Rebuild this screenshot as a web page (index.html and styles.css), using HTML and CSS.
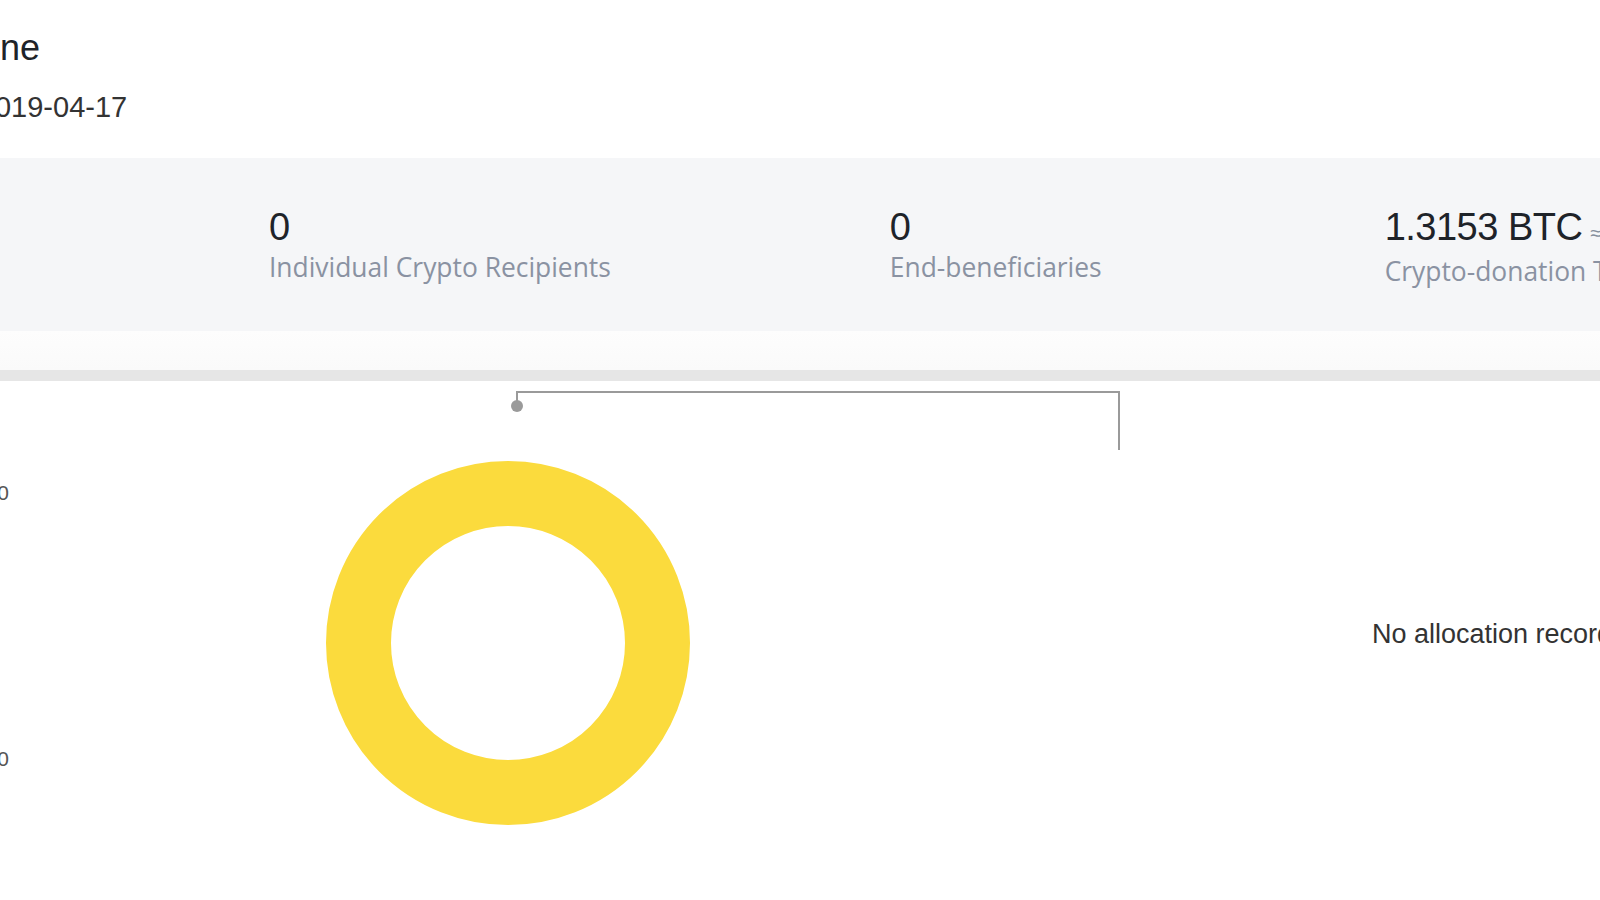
FILE: index.html
```html
<!DOCTYPE html>
<html>
<head>
    <meta charset="UTF-8">
    <title>Idai Cyclone - Donation Details</title>
    <link rel="stylesheet" href="styles.css">
</head>
<body>
    <div class="project-head">
        <h1 class="project-title">Idai Cyclone</h1>
        <div class="project-date">Start date: 2019-04-17</div>
    </div>

    <div class="stats">
        <div class="stat">
            <div class="stat-value">0</div>
            <div class="stat-label">Individual Crypto Recipients</div>
        </div>
        <div class="stat">
            <div class="stat-value">0</div>
            <div class="stat-label">End-beneficiaries</div>
        </div>
        <div class="stat stat-total">
            <div class="stat-value">1.3153 BTC<span class="approx">≈ $6,741.21</span></div>
            <div class="stat-label">Crypto-donation Total</div>
        </div>
    </div>

    <div class="tabs-shade"></div>
    <div class="tabs-line"></div>

    <div class="chart">
        <div class="axis">
            <span class="axis-label">0</span>
            <span class="axis-label axis-label-low">0</span>
        </div>

        <svg class="donut" width="1151" height="519" viewBox="0 0 1151 519">
            <!-- leader line to the legend -->
            <polyline points="508,25 508,11 1110,11 1110,69" fill="none" stroke="#9a9a9a" stroke-width="2"/>
            <circle cx="508" cy="25" r="6" fill="#9a9a9a"/>
            <circle cx="499" cy="262" r="149.5" fill="none" stroke="#fbdb3d" stroke-width="65"/>
        </svg>

        <div class="empty">No allocation records</div>
    </div>
</body>
</html>
```

FILE: styles.css
```css
body {
    margin: 0;
    overflow: hidden;
    background: #fff;
    font-family: 'Liberation Sans', Arial, sans-serif;
    color: #1e2329;
}

.project-head {
    margin-left: -158px;
    padding-top: 26px;
    white-space: nowrap;
}

.project-title {
    margin: 0;
    font-size: 36px;
    font-weight: normal;
    line-height: 44px;
    color: #1e2329;
}

.project-date {
    margin: 21px 0 0 -5px;
    font-size: 29px;
    line-height: 32px;
    color: #333;
}

.stats {
    display: flex;
    gap: 279px;
    height: 173px;
    margin-top: 35px;
    padding: 46px 0 0 269px;
    box-sizing: border-box;
    background: #f5f6f8;
}

.stat {
    flex-shrink: 0;
    white-space: nowrap;
}

.stat-value {
    font-size: 38px;
    line-height: 46px;
    letter-spacing: -0.5px;
    color: #1e2329;
}

.approx {
    margin-left: 8px;
    font-size: 20px;
    line-height: 0;
    letter-spacing: 0;
    color: #848e9c;
}

.stat-label {
    margin-top: 1px;
    font-family: 'Open Sans', sans-serif;
    font-size: 26.4px;
    line-height: 32px;
    color: #8a92a2;
}

.stat-total {
    margin-left: 4px;
}

.stat-total .stat-label {
    margin-top: 5px;
}

.tabs-shade {
    height: 39px;
    background: linear-gradient(#fdfdfd, #fafafa);
}

.tabs-line {
    height: 11px;
    background: #e6e6e6;
}

.chart {
    display: flex;
    height: 519px;
}

.axis {
    display: flex;
    flex-direction: column;
    width: 9px;
    flex-shrink: 0;
    text-align: right;
    padding-top: 100px;
}

.axis-label {
    margin-left: -6px;
    font-size: 21px;
    line-height: 24px;
    color: #555;
}

.axis-label-low {
    margin-top: 242px;
}

.donut {
    display: block;
    flex-shrink: 0;
}

.empty {
    flex: 1;
    padding: 237px 0 0 212px;
    font-size: 27px;
    line-height: 32px;
    color: #333;
    white-space: nowrap;
}
```
